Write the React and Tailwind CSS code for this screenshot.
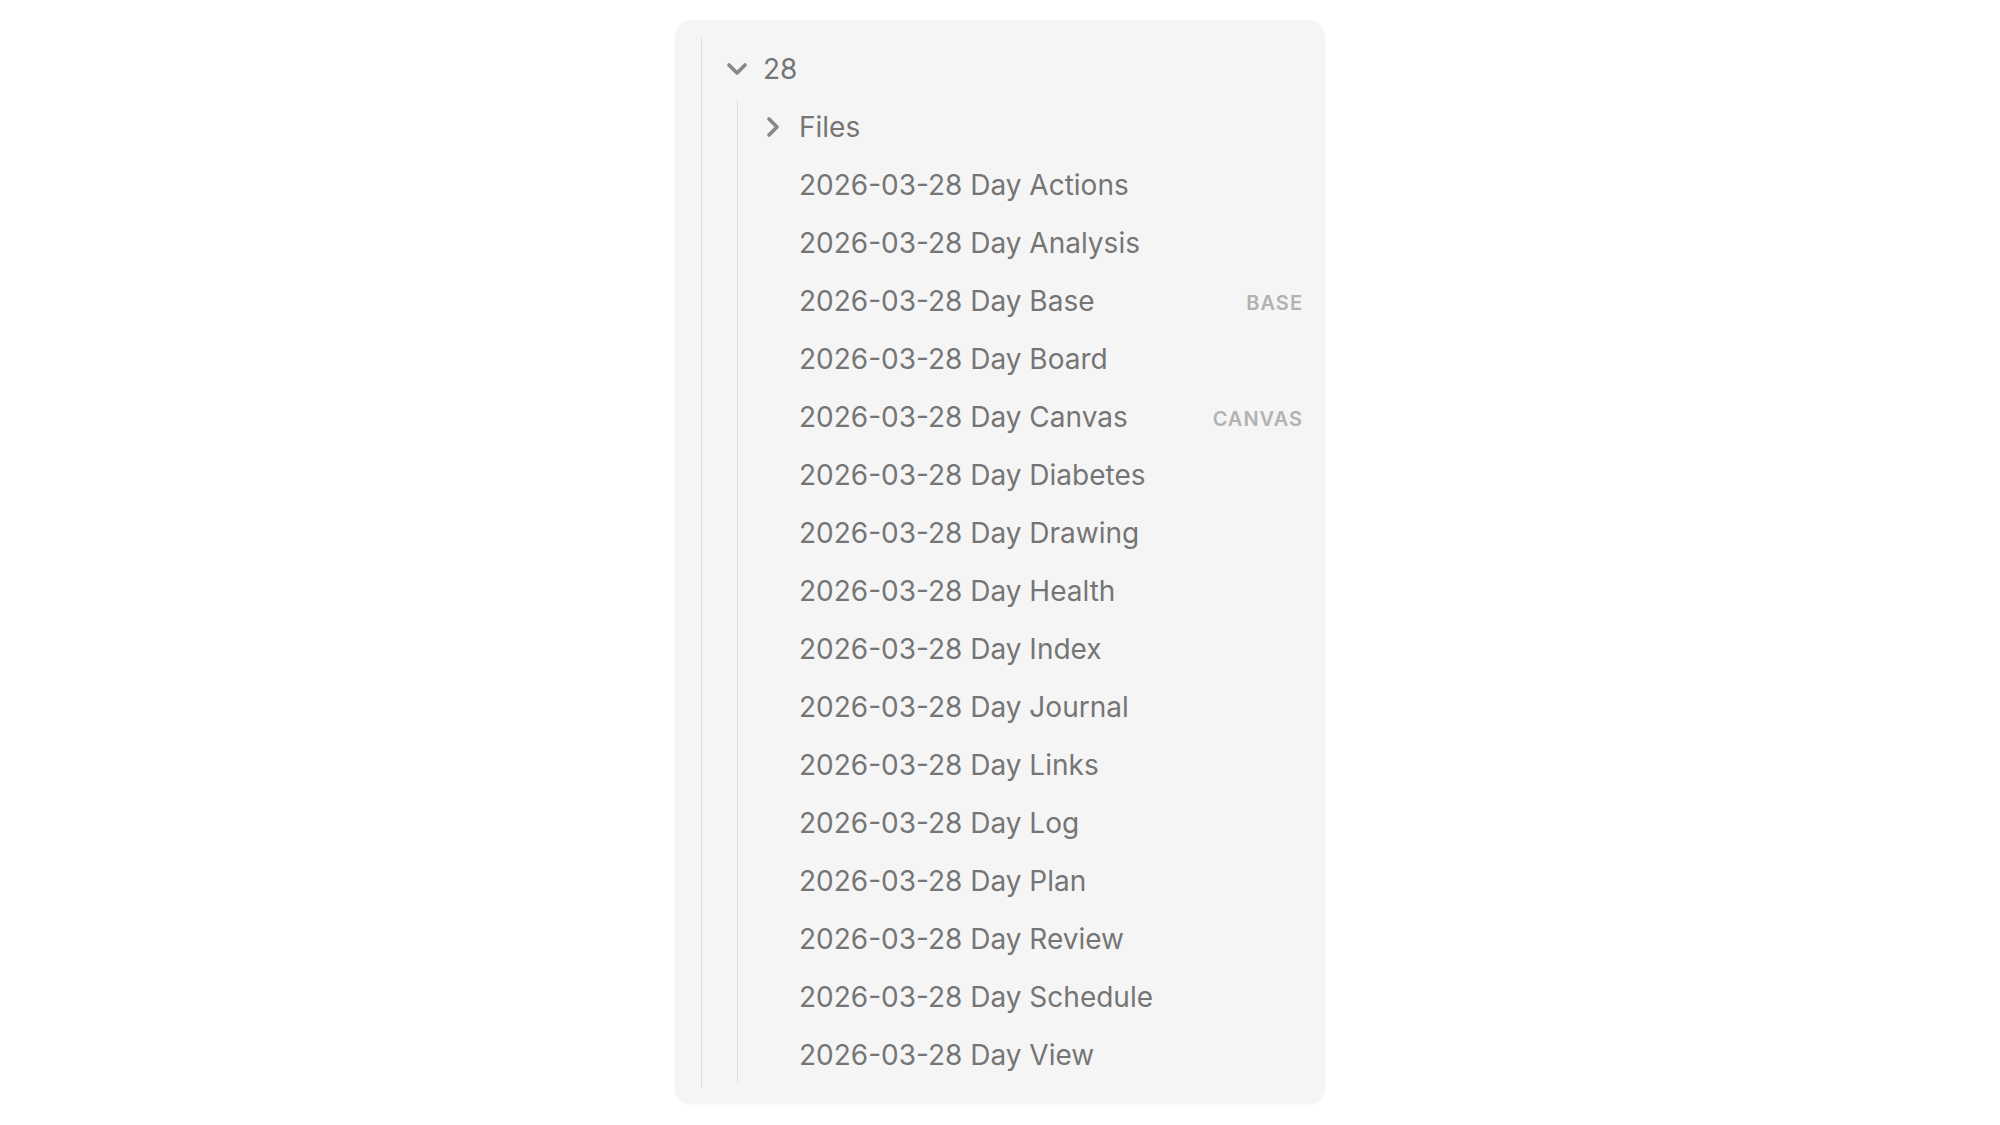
import { ChevronDown, ChevronRight } from 'lucide-react';
import { useState } from 'react';

const DATE = '2026-03-28';

const FILES = [
    { name: 'Day Actions' },
    { name: 'Day Analysis' },
    { name: 'Day Base', tag: 'BASE' },
    { name: 'Day Board' },
    { name: 'Day Canvas', tag: 'CANVAS' },
    { name: 'Day Diabetes' },
    { name: 'Day Drawing' },
    { name: 'Day Health' },
    { name: 'Day Index' },
    { name: 'Day Journal' },
    { name: 'Day Links' },
    { name: 'Day Log' },
    { name: 'Day Plan' },
    { name: 'Day Review' },
    { name: 'Day Schedule' },
    { name: 'Day View' },
];

/* Collapsible folder row; children hang off their own indent guide. */
function Folder({ name, defaultOpen = false, children }) {
    const [open, setOpen] = useState(defaultOpen);
    const Chevron = open ? ChevronDown : ChevronRight;
    return (
        <li>
            <button
                type="button"
                aria-expanded={open}
                onClick={() => setOpen(!open)}
                className="flex h-[54px] w-full cursor-pointer items-center gap-2.5 pl-[19px] text-left"
            >
                <Chevron size={32} strokeWidth={2.75} className="shrink-0 text-[#888888]" />
                <span>{name}</span>
            </button>
            {open && children ? (
                <ul className="mt-1 ml-[35px] flex flex-col gap-1 border-l border-[#dedede]">{children}</ul>
            ) : null}
        </li>
    );
}

function File({ name, tag }) {
    return (
        <li>
            <a href="#" className="flex h-[54px] items-center justify-between pr-[22px] pl-[61px]">
                <span className="truncate">{DATE} {name}</span>
                {tag ? (
                    <span className="pt-1 text-[20px] leading-6 font-semibold tracking-wider text-[#b2b2b2]">{tag}</span>
                ) : null}
            </a>
        </li>
    );
}

export default function App() {
    return (
        <main className="flex justify-center bg-white py-[21px]">
            <nav
                aria-label="Files"
                className="w-full max-w-[650px] rounded-2xl bg-[#f5f5f5] pt-[17px] pb-4 pl-[26px] font-['Inter',sans-serif] text-[28px] leading-9 text-[#757575] shadow-[0_0_0_1px_#fafafa]"
            >
                <ul className="border-l border-[#dedede] pt-1 pb-1.5">
                    <Folder name="28" defaultOpen>
                        <Folder name="Files" />
                        {FILES.map(file => <File key={file.name} {...file} />)}
                    </Folder>
                </ul>
            </nav>
        </main>
    );
}
